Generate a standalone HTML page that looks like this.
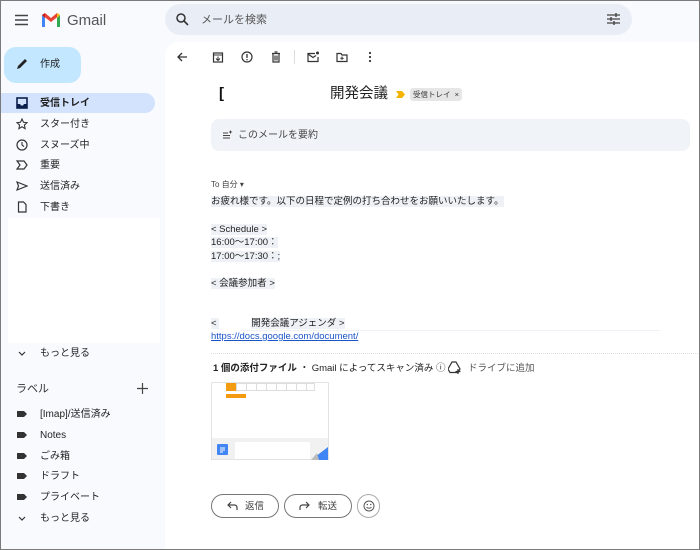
<!DOCTYPE html>
<html><head><meta charset="utf-8"><style>
*{box-sizing:border-box;margin:0;padding:0}
html{width:700px;height:550px;overflow:hidden}
body{width:700px;height:550px;overflow:hidden;background:#f8fafd;font-family:"Liberation Sans","Noto Sans CJK JP",sans-serif;position:relative;color:#1f1f1f}
#frame{position:absolute;left:0;top:0;width:700px;height:550px;border:1px solid #7a7a7a;z-index:10;pointer-events:none}
.abs{position:absolute}
svg{display:block}
.nav{position:absolute;left:0;width:155px;height:20px;font-size:10px;line-height:12px;color:#1f1f1f}
.nav .ic{position:absolute;left:16px;top:4px;width:12px;height:12px}
.nav span{position:absolute;left:40px;top:5px}
.sel{background:#d3e3fd;border-radius:0 10px 10px 0;font-weight:bold}
.tb{position:absolute;top:51px;width:12px;height:12px}
.hl{background:#eef1f6}
.t{position:absolute;left:211px;font-size:9.5px;color:#222;line-height:13px}
.btn{position:absolute;top:494px;height:24px;border:1px solid #777;border-radius:12px;font-size:9.5px;line-height:12px;color:#444}
</style></head><body>
<div id="frame"></div>
<svg class="abs" style="left:15px;top:14px" width="13" height="12"><path d="M0 1.5h13M0 6h13M0 10.5h13" stroke="#444" stroke-width="1.4"/></svg>
<svg class="abs" style="left:41px;top:12px" width="20" height="15" viewBox="0 0 20 15"><path d="M1 3v12h3V6z" fill="#4285f4"/><path d="M16 6v9h3V3z" fill="#34a853"/><path d="M1 3l9 7 9-7-3-2-6 5-6-5z" fill="#ea4335"/><path d="M16 1l3 2v0l-3 3z" fill="#fbbc04"/><path d="M1 3l3 3V1z" fill="#c5221f"/></svg>
<div class="abs" style="left:67px;top:12px;font-size:15px;line-height:18px;color:#555">Gmail</div>
<div class="abs" style="left:165px;top:4px;width:467px;height:31px;background:#e9eef6;border-radius:16px"></div>
<svg class="abs" style="left:176px;top:13px" width="13" height="13"><circle cx="5" cy="5" r="4" fill="none" stroke="#333" stroke-width="1.5"/><path d="M8 8l4 4" stroke="#333" stroke-width="1.6"/></svg>
<div class="abs" style="left:201px;top:14px;font-size:11px;line-height:13px;color:#555">メールを検索</div>
<svg class="abs" style="left:607px;top:13px" width="13" height="12"><path d="M0 2h13M0 6h13M0 10h13" stroke="#444" stroke-width="1.2"/><path d="M9 0v4M4 4v4M7 8v4" stroke="#444" stroke-width="1.4"/></svg>
<div class="abs" style="left:4px;top:47px;width:77px;height:36px;background:#c2e7ff;border-radius:12px"></div>
<svg class="abs" style="left:16px;top:58px" width="12" height="12"><path d="M1 11l1-3 7-7 2 2-7 7z" fill="#222"/></svg>
<div class="abs" style="left:40px;top:59px;font-size:10px;line-height:12px;color:#1f1f1f">作成</div>
<div class="nav sel" style="top:93px"><svg class="ic" viewBox="0 0 12 12"><rect x="1" y="1" width="10" height="10" fill="none" stroke="#0b1f4a" stroke-width="1.6"/><path d="M1 7h3l1 1.5h2L8 7h3v4H1z" fill="#0b1f4a"/></svg><span>受信トレイ</span></div>
<div class="nav" style="top:114px"><svg class="ic" viewBox="0 0 12 12"><path d="M6 1l1.5 3.3 3.5.4-2.6 2.4.7 3.5L6 8.8 2.9 10.6l.7-3.5L1 4.7l3.5-.4z" fill="none" stroke="#333" stroke-width="1.1"/></svg><span>スター付き</span></div>
<div class="nav" style="top:135px"><svg class="ic" viewBox="0 0 12 12"><circle cx="6" cy="6" r="5" fill="none" stroke="#333" stroke-width="1.2"/><path d="M6 3v3l2 1.5" stroke="#333" fill="none" stroke-width="1.1"/></svg><span>スヌーズ中</span></div>
<div class="nav" style="top:155px"><svg class="ic" viewBox="0 0 12 12"><path d="M1 2h7l3 4-3 4H1l3-4z" fill="none" stroke="#333" stroke-width="1.2"/></svg><span>重要</span></div>
<div class="nav" style="top:176px"><svg class="ic" viewBox="0 0 12 12"><path d="M1 2l10 4-10 4 1.5-4z" fill="none" stroke="#333" stroke-width="1.2"/></svg><span>送信済み</span></div>
<div class="nav" style="top:197px"><svg class="ic" viewBox="0 0 12 12"><path d="M2.5 1h5l2.5 2.5V11h-7.5z" fill="none" stroke="#333" stroke-width="1.2"/></svg><span>下書き</span></div>
<div class="abs" style="left:8px;top:218px;width:152px;height:125px;background:#fff"></div>
<div class="nav" style="top:343px"><svg class="ic" viewBox="0 0 12 12"><path d="M3 5l3 3 3-3" fill="none" stroke="#333" stroke-width="1.2"/></svg><span>もっと見る</span></div>
<div class="abs" style="left:16px;top:383px;font-size:11px;line-height:13px;color:#333">ラベル</div>
<svg class="abs" style="left:137px;top:383px" width="11" height="11"><path d="M5.5 0v11M0 5.5h11" stroke="#444" stroke-width="1.2"/></svg>
<div class="nav" style="top:404px"><svg class="ic" viewBox="0 0 12 12"><path d="M1 3h7l3 3-3 3H1z" fill="#333"/></svg><span>[Imap]/送信済み</span></div>
<div class="nav" style="top:425px"><svg class="ic" viewBox="0 0 12 12"><path d="M1 3h7l3 3-3 3H1z" fill="#333"/></svg><span>Notes</span></div>
<div class="nav" style="top:446px"><svg class="ic" viewBox="0 0 12 12"><path d="M1 3h7l3 3-3 3H1z" fill="#333"/></svg><span>ごみ箱</span></div>
<div class="nav" style="top:466px"><svg class="ic" viewBox="0 0 12 12"><path d="M1 3h7l3 3-3 3H1z" fill="#333"/></svg><span>ドラフト</span></div>
<div class="nav" style="top:487px"><svg class="ic" viewBox="0 0 12 12"><path d="M1 3h7l3 3-3 3H1z" fill="#333"/></svg><span>プライベート</span></div>
<div class="nav" style="top:508px"><svg class="ic" viewBox="0 0 12 12"><path d="M3 5l3 3 3-3" fill="none" stroke="#333" stroke-width="1.2"/></svg><span>もっと見る</span></div>
<div class="abs" style="left:165px;top:42px;width:535px;height:508px;background:#fff;border-radius:14px 0 0 0"></div>
<svg class="tb" style="left:176px" viewBox="0 0 12 12"><path d="M11 6H2M6 2L2 6l4 4" fill="none" stroke="#333" stroke-width="1.3"/></svg>
<svg class="tb" style="left:212px" viewBox="0 0 12 12"><rect x="1.5" y="2" width="9" height="9" fill="none" stroke="#333" stroke-width="1.2"/><path d="M1.5 4h9M6 5.5v4M4 7.5l2 2 2-2" stroke="#333" fill="none"/></svg>
<svg class="tb" style="left:241px" viewBox="0 0 12 12"><circle cx="6" cy="6" r="5" fill="none" stroke="#333" stroke-width="1.2"/><path d="M6 3v4M6 8v1.3" stroke="#333" stroke-width="1.3"/></svg>
<svg class="tb" style="left:270px" viewBox="0 0 12 12"><path d="M2 2.5h8M4.5 1h3M3 3v8h6V3M5 4.5v5M7 4.5v5" fill="none" stroke="#333" stroke-width="1.2"/></svg>
<div class="abs" style="left:294px;top:50px;width:1px;height:14px;background:#ddd"></div>
<svg class="tb" style="left:307px" viewBox="0 0 12 12"><path d="M8 2.5H1v8h10V6M1 3l5 3.5 3-2" fill="none" stroke="#333" stroke-width="1.2"/><circle cx="10.5" cy="2" r="1.5" fill="#333"/></svg>
<svg class="tb" style="left:336px" viewBox="0 0 12 12"><path d="M1 2.5h4l1 1.5h5v6.5H1z" fill="none" stroke="#333" stroke-width="1.2"/><path d="M6 5.5v3.5M4.3 7.2h3.4" stroke="#333"/></svg>
<svg class="tb" style="left:364px" viewBox="0 0 12 12"><circle cx="6" cy="2" r="1.1" fill="#333"/><circle cx="6" cy="6" r="1.1" fill="#333"/><circle cx="6" cy="10" r="1.1" fill="#333"/></svg>
<div class="abs" style="left:219px;top:85px;font-size:15px;line-height:18px;color:#111;font-weight:bold">[</div>
<div class="abs" style="left:330px;top:85px;font-size:14.5px;line-height:18px;color:#222">開発会議</div>
<svg class="abs" style="left:396px;top:91px" width="9" height="7"><path d="M0 0h6l3 3.5-3 3.5H0l2.5-3.5z" fill="#f4b400"/></svg>
<div class="abs" style="left:410px;top:88px;height:13px;padding:0 3px;background:#e6e6e6;border-radius:3px;font-size:7.5px;line-height:13px;color:#333">受信トレイ &nbsp;×</div>
<div class="abs" style="left:211px;top:119px;width:479px;height:32px;background:#f0f4f9;border-radius:8px"></div>
<svg class="abs" style="left:223px;top:130px" width="10" height="9"><path d="M0 3h5M0 5.5h7M0 8h7" stroke="#444" stroke-width="1"/><path d="M7.5 0l.6 1.4 1.4.6-1.4.6-.6 1.4-.6-1.4L5.5 2l1.4-.6z" fill="#444"/></svg>
<div class="abs" style="left:238px;top:129px;font-size:10px;line-height:13px;color:#444">このメールを要約</div>
<div class="abs" style="left:211px;top:180px;font-size:8px;line-height:10px;color:#444">To 自分 ▾</div>
<div class="t" style="top:195px"><span class="hl">お疲れ様です。以下の日程で定例の打ち合わせをお願いいたします。</span></div>
<div class="t" style="top:223px"><span class="hl">&lt; Schedule &gt;</span></div>
<div class="t" style="top:236px"><span class="hl">16:00〜17:00：</span></div>
<div class="t" style="top:250px"><span class="hl">17:00〜17:30：;</span></div>
<div class="t" style="top:277px"><span class="hl">&lt; 会議参加者 &gt;</span></div>
<div class="t" style="top:317px"><span class="hl">&lt; </span><span style="display:inline-block;width:32px"></span><span class="hl">開発会議アジェンダ &gt;</span></div>
<div class="abs" style="left:240px;top:330px;width:420px;height:1px;background:#eef1f6"></div>
<div class="t" style="top:330px;color:#1a55c8;text-decoration:underline">https://docs.google.com/document/</div>
<div class="abs" style="left:211px;top:353px;width:489px;border-top:1px dotted #ddd"></div>
<div class="abs" style="left:213px;top:363px;font-size:9.5px;line-height:12px;color:#222"><b>1 個の添付ファイル</b> ・ Gmail によってスキャン済み ⓘ</div>
<svg class="abs" style="left:448px;top:361px" width="13" height="13"><path d="M4 1h4l4 7-2 3.5H2L0 8z" fill="none" stroke="#333" stroke-width="1.2"/><path d="M10 8v5M7.5 10.5h5" stroke="#333" stroke-width="1.2"/></svg>
<div class="abs" style="left:468px;top:363px;font-size:9.5px;line-height:12px;color:#555">ドライブに追加</div>
<div class="abs" style="left:211px;top:382px;width:118px;height:78px;border:1px solid #e3e3e3;background:#fff"></div>
<div class="abs" style="left:226px;top:383px;width:89px;height:8px;border:1px solid #ddd;background:repeating-linear-gradient(90deg,#fff 0 9px,#ddd 9px 10px)"></div>
<div class="abs" style="left:226px;top:383px;width:10px;height:8px;background:#f39c12"></div>
<div class="abs" style="left:226px;top:394px;width:20px;height:4px;background:#f39c12"></div>
<div class="abs" style="left:212px;top:438px;width:116px;height:21px;background:#f1f1f1"></div>
<div class="abs" style="left:235px;top:442px;width:75px;height:17px;background:#fff"></div>
<div class="abs" style="left:217px;top:444px;width:11px;height:11px;background:#4285f4;border-radius:1px"></div>
<svg class="abs" style="left:218px;top:445px" width="9" height="9"><path d="M2 3h5M2 5h5M2 7h3" stroke="#fff"/></svg>
<svg class="abs" style="left:311px;top:447px" width="17" height="13"><path d="M17 0v13H0z" fill="#4285f4"/><path d="M0 13l6-7 2 7z" fill="#bbb"/></svg>
<div class="btn" style="left:211px;width:68px"><svg class="abs" style="left:15px;top:6px" width="11" height="10"><path d="M10 9V6.5C10 5 9 4 7.5 4H1.5M4 1L1 4l3 3" fill="none" stroke="#444" stroke-width="1.2"/></svg><span class="abs" style="left:33px;top:6px">返信</span></div>
<div class="btn" style="left:284px;width:68px"><svg class="abs" style="left:14px;top:6px" width="11" height="10"><path d="M1 9V6.5C1 5 2 4 3.5 4H9.5M7 1l3 3-3 3" fill="none" stroke="#444" stroke-width="1.2"/></svg><span class="abs" style="left:33px;top:6px">転送</span></div>
<div class="btn" style="left:357px;width:23px;border-color:#aaa"><svg class="abs" style="left:5px;top:5px" width="12" height="12"><circle cx="6" cy="6" r="5" fill="none" stroke="#555"/><path d="M3.5 7c1.2 1.6 3.8 1.6 5 0" fill="none" stroke="#555"/><circle cx="4.3" cy="4.6" r=".7" fill="#555"/><circle cx="7.7" cy="4.6" r=".7" fill="#555"/></svg></div>
</body></html>
